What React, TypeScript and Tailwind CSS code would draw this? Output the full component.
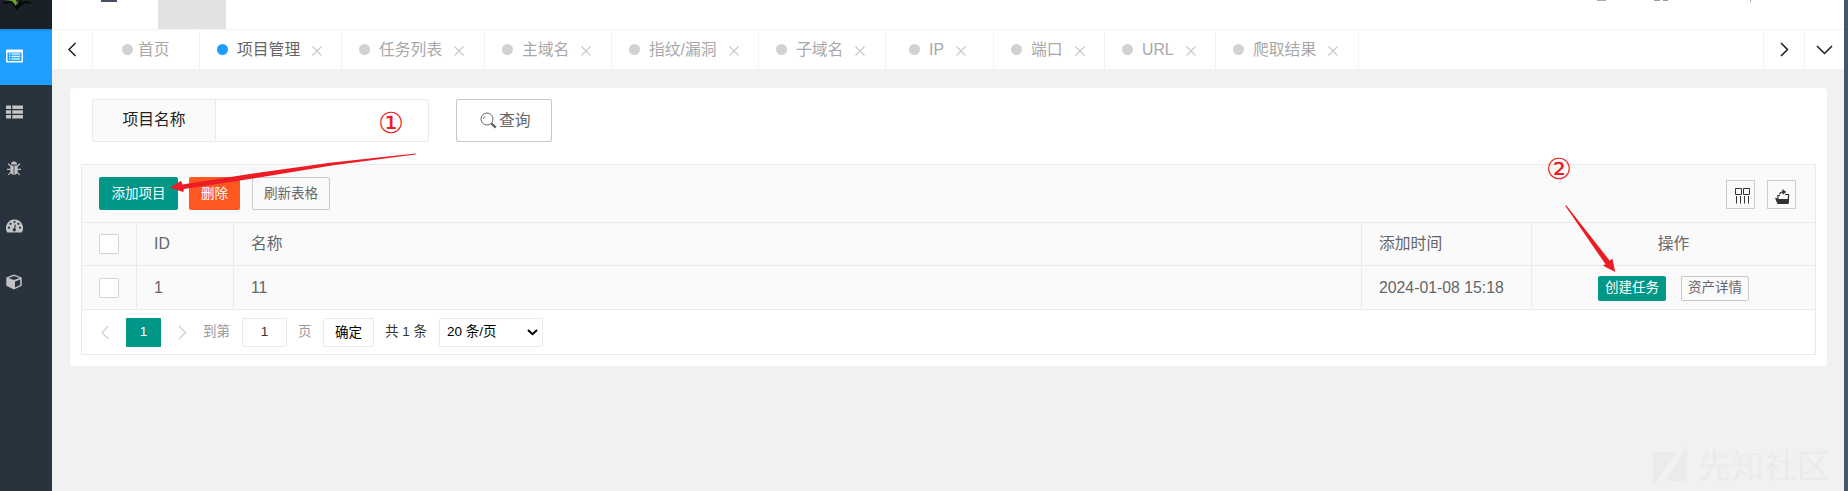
import React from "react";

const tabs = [
  { label: "首页", box: "w-[107px] pl-[29px]", gap: "w-[5px]", closable: false },
  { label: "项目管理", box: "w-[142px] pl-[17px]", gap: "w-[9px]", closable: true, active: true },
  { label: "任务列表", box: "w-[143px] pl-[17px]", gap: "w-[9px]", closable: true },
  { label: "主域名", box: "w-[127px] pl-[17px]", gap: "w-[9px]", closable: true },
  { label: "指纹/漏洞", box: "w-[147px] pl-[17px]", gap: "w-[9px]", closable: true },
  { label: "子域名", box: "w-[127px] pl-[17px]", gap: "w-[9px]", closable: true },
  { label: "IP", box: "w-[108px] pl-[23px]", gap: "w-[9px]", closable: true },
  { label: "端口", box: "w-[111px] pl-[17px]", gap: "w-[9px]", closable: true },
  { label: "URL", box: "w-[111px] pl-[17px]", gap: "w-[9px]", closable: true },
  { label: "爬取结果", box: "w-[143px] pl-[17px]", gap: "w-[9px]", closable: true },
];

function Chevron({ dir, color, className }: { dir: "left" | "right" | "down"; color: string; className: string }) {
  const d = { left: "M7.5 1L1 7.5L7.5 14", right: "M1 1L7.5 7.5L1 14", down: "M1 1L8.5 8.5L16 1" }[dir];
  return (
    <svg className={className} viewBox={dir === "down" ? "0 0 17 10" : "0 0 9 15"} fill="none" stroke={color} strokeWidth="1.5">
      <path d={d} />
    </svg>
  );
}

function Sidebar() {
  return (
    <aside className="flex w-[52px] shrink-0 flex-col bg-[#28333e]">
      <div className="h-[29px] bg-[#192027]">
        <svg width="52" height="12" viewBox="0 0 52 12">
          <path d="M3 3.5L9 2L14 4L17 9L20 5L25 2L31 3" fill="none" stroke="#050805" strokeWidth="1.8" />
          <path d="M5 0L12 1L16 6V0Z M17 0L18 6L16 3Z" fill="#6aa52a" />
          <path d="M17 7L22 0" stroke="#050805" strokeWidth="1.5" />
        </svg>
      </div>
      <div className="flex h-14 items-center border-t-2 border-[#1b8de4] bg-[#1e9fff] pb-1 pl-1.5">
        <svg width="17" height="14" viewBox="0 0 17 14">
          <rect width="17" height="13" y=".5" rx="1.2" fill="#fff" />
          <path d="M1.5 3.5H15.5V12H1.5Z" fill="#1e9fff" />
          <path d="M3 5H4.3M3 7.5H4.3M3 10H4.3M5.5 5H14M5.5 7.5H14M5.5 10H14" stroke="#d8efff" strokeWidth="1.5" />
        </svg>
      </div>
      <div className="flex h-[54px] items-center pl-1.5">
        <svg width="17" height="14" viewBox="0 0 17 14" fill="#c3c3c3">
          <path d="M0 .5H5V4H0ZM6.3 .5H17V4H6.3ZM0 5.2H5V8.7H0ZM6.3 5.2H17V8.7H6.3ZM0 9.9H5V13.4H0ZM6.3 9.9H17V13.4H6.3Z" />
        </svg>
      </div>
      <div className="flex h-[59px] items-center pl-[7px]">
        <svg width="14" height="15" viewBox="0 0 14 15">
          <path d="M4 3.6A3 3 0 0 1 10 3.6Z M3.3 4.5H6.6V14C4.5 13.8 3.3 12 3.3 9.5Z M7.4 4.5H10.7V9.5C10.7 12 9.5 13.8 7.4 14Z" fill="#c3c3c3" />
          <path d="M1.2 2.8L3.8 5.2M12.8 2.8L10.2 5.2M0 8.4H3.5M14 8.4H10.5M1.4 13.8L4 11.2M12.6 13.8L10 11.2" stroke="#c3c3c3" strokeWidth="1.2" />
        </svg>
      </div>
      <div className="flex h-[55px] items-center pl-1.5">
        <svg width="17" height="14" viewBox="0 0 17 14">
          <path d="M8.5 .5A8.4 8.4 0 0 0 1.3 13.4H15.7A8.4 8.4 0 0 0 8.5 .5Z" fill="#c3c3c3" />
          <g fill="#28333e">
            <circle cx="3" cy="8.7" r="1.1" /><circle cx="4.6" cy="4.8" r="1.1" /><circle cx="8.5" cy="3" r="1.1" /><circle cx="12.4" cy="4.8" r="1.1" /><circle cx="14" cy="8.7" r="1.1" /><circle cx="8.3" cy="10.8" r="1.6" />
          </g>
          <path d="M8.4 10.5L9.4 5.6" stroke="#28333e" strokeWidth="1.1" />
        </svg>
      </div>
      <div className="flex h-[57px] items-center pl-1.5">
        <svg width="16" height="16" viewBox="0 0 16 16">
          <path d="M8 .5L15.7 3.4V11.7L8 15.4L.3 11.7V3.4Z" fill="#c3c3c3" />
          <path d="M8 2L13.5 4L8 6L2.5 4Z M9 7.5L14.2 5.6V11L9 13.6Z" fill="#28333e" />
        </svg>
      </div>
    </aside>
  );
}

function TabBar() {
  return (
    <div className="flex h-10 border-t border-[#f3f3f3] bg-white">
      <div className="flex w-[41px] items-center border-r border-[#f3f3f3] pl-4">
        <Chevron dir="left" color="#1c1c1c" className="h-[15px] w-[9px]" />
      </div>
      {tabs.map((t) => (
        <div key={t.label} className={`flex shrink-0 items-center border-r border-[#f3f3f3] ${t.box}`}>
          <span className={`h-[11px] w-[11px] shrink-0 rounded-full ${t.active ? "bg-[#1e9fff]" : "bg-[#d2d2d2]"}`} />
          <span className={`shrink-0 ${t.gap}`} />
          <span className={`whitespace-nowrap text-[15.8px] leading-5 ${t.active ? "text-[#666]" : "text-[#a8a8a8]"}`}>{t.label}</span>
          {t.closable && (
            <svg className="mt-[2px] ml-3 h-[10px] w-[10px] shrink-0" viewBox="0 0 10 10" stroke="#c9c9c9" strokeWidth="1.1">
              <path d="M.5 .5L9.5 9.5M9.5 .5L.5 9.5" />
            </svg>
          )}
        </div>
      ))}
      <div className="ml-auto flex w-[41px] items-center border-l border-[#f3f3f3] pl-4">
        <Chevron dir="right" color="#1c1c1c" className="h-[15px] w-[9px]" />
      </div>
      <div className="flex w-10 items-center border-l border-[#f3f3f3] pl-[11px]">
        <Chevron dir="down" color="#1c1c1c" className="h-[10px] w-[17px]" />
      </div>
    </div>
  );
}

const line = "border-[#eaeaea]";

function Row({ children, className }: { children: React.ReactNode[]; className: string }) {
  return (
    <div className={`flex border-b bg-[#fafafa] text-[15.8px] text-[#666] ${line} ${className}`}>
      <div className={`flex w-[55px] items-center border-r pl-[17px] ${line}`}>
        <span className="h-5 w-5 rounded-[2px] border border-[#d2d2d2] bg-white" />
      </div>
      <div className={`flex w-[97px] items-center border-r pl-[17px] ${line}`}>{children[0]}</div>
      <div className={`flex flex-1 items-center border-r pl-[17px] ${line}`}>{children[1]}</div>
      <div className={`flex w-[170px] items-center border-r pl-[17px] whitespace-nowrap ${line}`}>{children[2]}</div>
      <div className="flex w-[283px] items-center justify-center">{children[3]}</div>
    </div>
  );
}

function DataTable() {
  return (
    <div className={`ml-[11px] mt-[22px] h-[191px] w-[1735px] border ${line}`}>
      <div className={`flex h-[58px] items-start border-b bg-[#fafafa] pl-[17px] text-[13.5px] ${line}`}>
        <button className="mt-3 h-[33px] w-[79px] rounded-[2px] bg-[#009688] pt-0.5 text-white">添加项目</button>
        <button className="mt-3 ml-[11px] h-[33px] w-[51px] rounded-[2px] bg-[#ff5722] pt-0.5 text-white">删除</button>
        <button className="mt-3 ml-3 h-[33px] w-[78px] rounded-[2px] border border-[#c9c9c9] pt-0.5 text-[#666]">刷新表格</button>
        <div className="mt-[15px] mr-[19px] ml-auto flex gap-3">
          <span className="flex h-[29px] w-[29px] border border-[#ccc] pt-[7px] pl-2">
            <svg width="15" height="16" viewBox="0 0 15 16" fill="none" stroke="#333" strokeWidth="1">
              <path d="M.5 .5H6.5V6.5H.5ZM8.5 .5H14.5V6.5H8.5ZM1.5 8V15.5M5.5 8V15.5M9.5 8V15.5M13.5 8V15.5" />
            </svg>
          </span>
          <span className="flex h-[29px] w-[29px] border border-[#ccc] pt-2 pl-[7px]">
            <svg width="15" height="16" viewBox="0 0 15 16">
              <path d="M0 9H2.5L3.5 10H12.5L13 9H14V14L13 15H2.5Z" fill="#333" />
              <path d="M3 9.5V6.5H5M10 5.5H13.5V10M4.5 5.5Q5 2.8 9 2.8" fill="none" stroke="#333" strokeWidth="1.2" />
              <path d="M7.5 0L11.3 2.9L7.5 5.8Z" fill="#333" />
            </svg>
          </span>
        </div>
      </div>
      <Row className="h-[43px]">
        <span>ID</span>
        <span>名称</span>
        <span>添加时间</span>
        <span>操作</span>
      </Row>
      <Row className="h-11">
        <span>1</span>
        <span>11</span>
        <span>2024-01-08 15:18</span>
        <div className="mt-[2px] flex gap-[15px] text-[13.5px]">
          <button className="h-[25px] w-[68px] rounded-[2px] bg-[#009688] text-white">创建任务</button>
          <button className="h-[25px] w-[68px] rounded-[2px] border border-[#c9c9c9] text-[#666]">资产详情</button>
        </div>
      </Row>
      <div className="flex h-[45px] items-center pl-[19px] text-[13.5px] whitespace-nowrap text-[#333]">
        <Chevron dir="left" color="#d2d2d2" className="h-[15px] w-[9px]" />
        <span className="ml-4 flex h-[29px] w-[35px] items-center justify-center rounded-[1px] bg-[#009688] text-white">1</span>
        <Chevron dir="right" color="#d2d2d2" className="ml-[17px] h-[15px] w-[9px]" />
        <span className="ml-4 w-[39px] text-[#999]">到第</span>
        <span className="flex h-[29px] w-[45px] items-center justify-center rounded-[2px] border border-[#eaeaea]">1</span>
        <span className="ml-[11px] w-[25px] text-[#999]">页</span>
        <button className="h-[29px] w-[51px] rounded-[2px] border border-[#eaeaea] pt-0.5 text-black">确定</button>
        <span className="ml-[11px] w-[54px]">共 1 条</span>
        <span className="flex h-[29px] w-[104px] items-center justify-between rounded-[2px] border border-[#eaeaea] pr-1 pl-[7px] text-black">
          20 条/页
          <svg width="11" height="7" viewBox="0 0 11 7" fill="none" stroke="#000" strokeWidth="2">
            <path d="M1 1L5.5 5.2L10 1" />
          </svg>
        </span>
      </div>
    </div>
  );
}

function Annotations() {
  return (
    <>
      <svg className="pointer-events-none absolute top-0 left-0" width="1848" height="491" viewBox="0 0 1848 491" fill="#ed1c24">
        <path d="M415.5 153.4L330 162.8L260 172.5L182.5 184.5L181 180.7L170 187.8L183.3 192L184 189L262 177L335 165L415.5 154.6Z" />
        <path d="M1565.2 205.8L1605.5 264.3L1602.7 265.4L1615.2 272L1612.4 258.6L1609.8 260.8L1566.2 205.3Z" />
      </svg>
      <span className="absolute top-[109px] left-[377px] flex h-7 w-7 items-center justify-center font-['DejaVu_Sans',sans-serif] text-[29px] leading-none text-[#ed1c24]">①</span>
      <span className="absolute top-[155px] left-[1545px] flex h-7 w-7 items-center justify-center font-['DejaVu_Sans',sans-serif] text-[29px] leading-none text-[#ed1c24]">②</span>
    </>
  );
}

export default function App() {
  return (
    <div className="relative flex h-[491px] w-[1848px] overflow-hidden bg-[#f1f1f1] font-['Liberation_Sans','Noto_Sans_CJK_SC',sans-serif]">
      <Sidebar />
      <main className="flex min-w-0 flex-1 flex-col">
        <header className="flex h-[29px] items-start bg-white">
          <span className="ml-[49px] h-[2px] w-4 bg-[#454f60]" />
          <span className="ml-[41px] h-[29px] w-[68px] bg-[#e2e2e2]" />
          <span className="ml-[1371px] h-px w-[9px] bg-[#aaa]" />
          <span className="ml-[48px] h-px w-1.5 bg-[#999]" />
          <span className="ml-[3px] h-px w-[5px] bg-[#999]" />
          <span className="ml-[82px] h-[2px] w-px bg-[#aaa]" />
        </header>
        <TabBar />
        <section className="mt-[19px] ml-[18px] h-[278px] w-[1757px] rounded-[4px] bg-white pt-[11px]">
          <div className="flex pl-[22px]">
            <div className="flex h-[43px] w-[337px] overflow-hidden rounded-[2px] border border-[#eaeaea]">
              <label className="flex w-[123px] items-center justify-center border-r border-[#eaeaea] bg-[#fafafa] pb-0.5 text-[15.8px] text-[#222]">项目名称</label>
            </div>
            <button className="ml-[27px] flex h-[43px] w-24 items-center rounded-[2px] border border-[#c9c9c9] pl-[23px] text-[15.8px] text-[#666]">
              <svg className="mr-[2px]" width="17" height="17" viewBox="0 0 17 17" fill="none" stroke="#666">
                <circle cx="7" cy="7" r="6" />
                <path d="M3.7 7A3.3 3.3 0 0 1 5 4.3" />
                <path d="M11.3 11.3L15.8 15.6" strokeWidth="2.4" />
              </svg>
              查询
            </button>
          </div>
          <DataTable />
        </section>
        <div className="mt-auto mr-[14px] mb-1 flex h-[42px] items-center justify-end gap-[10px] text-[#ebebeb]">
          <svg width="35" height="42" viewBox="0 0 35 42" fill="currentColor">
            <path d="M0 7H24L0 42Z M34 0V36H13Z" />
          </svg>
          <span className="text-[33px] leading-none">先知社区</span>
        </div>
      </main>
      <div className="w-1 shrink-0 bg-[#44566c]" />
      <Annotations />
    </div>
  );
}
